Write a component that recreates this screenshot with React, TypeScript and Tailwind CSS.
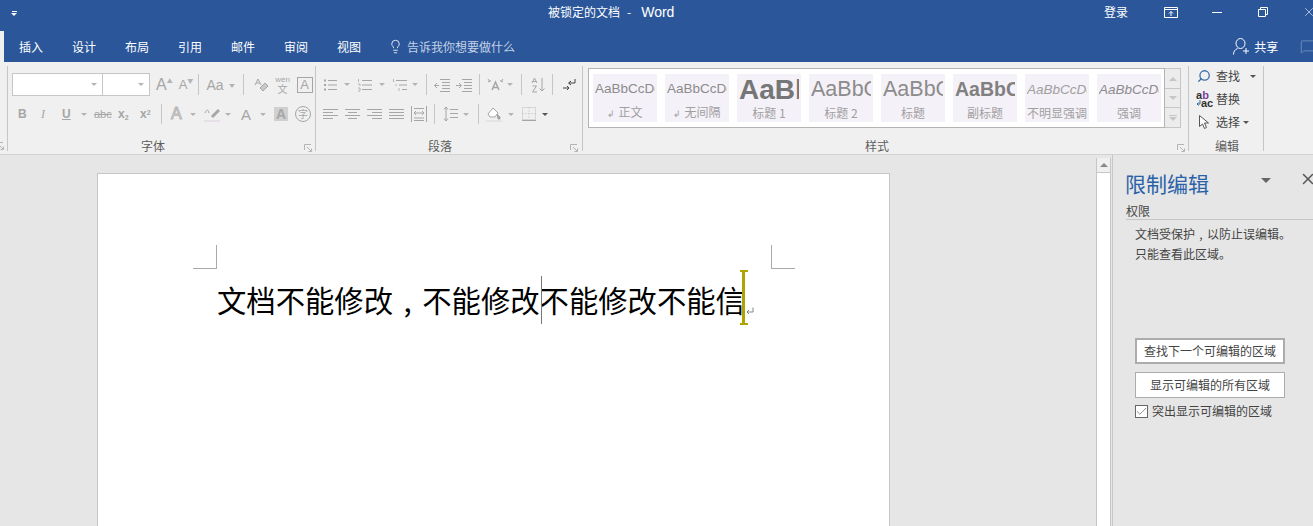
import { ReactNode } from "react";
import { Search, Lightbulb, MessageSquare, X, Check } from "lucide-react";

const cjk = "font-['Noto_Sans_CJK_SC','Noto_Sans',sans-serif]";

function Arrow({ className = "" }: { className?: string }) {
  return (
    <span className={`h-0 w-0 shrink-0 border-x-[3px] border-t-[3px] border-x-transparent border-t-[#b4b4b4] ${className}`} />
  );
}

function Sep({ className = "" }: { className?: string }) {
  return <span className={`w-px shrink-0 self-stretch bg-[#c6c6c6] ${className}`} />;
}

function Icon({ w = 16, h = 16, className = "", children }: { w?: number; h?: number; className?: string; children: ReactNode }) {
  return (
    <svg width={w} height={h} viewBox={`0 0 ${w} ${h}`} fill="none" stroke="#a6a6a6" strokeWidth="1" className={`shrink-0 ${className}`}>
      {children}
    </svg>
  );
}

function Launcher({ className = "" }: { className?: string }) {
  return (
    <svg width="8" height="8" viewBox="0 0 8 8" fill="none" stroke="#b4b4b4" className={className}>
      <path d="M.5 6V.5H7M3 3l4 4M4.5 7.5h3v-3" />
    </svg>
  );
}

function Lines({ widths }: { widths: number[][] }) {
  return (
    <Icon w={15} h={13}>
      {widths.map(([a, b], i) => (
        <path key={i} d={`M${a} ${i * 3 + 1.5}H${b}`} />
      ))}
    </Icon>
  );
}

function Group({ width, label, labelClass, launcher, children }: { width: string; label: string; labelClass: string; launcher?: string; children: ReactNode }) {
  return (
    <section className={`flex h-[85px] shrink-0 flex-col border-r border-[#c6c6c6] ${width}`}>
      <div className="h-[71px]">{children}</div>
      <div className="flex h-[14px] items-start">
        <span className={`mt-[1px] text-[12px] leading-[16px] text-[#5e5e5e] ${labelClass}`}>{label}</span>
        {launcher && <Launcher className={`mt-[7px] ${launcher}`} />}
      </div>
    </section>
  );
}

const L = "text-[#a6a6a6] font-['Liberation_Sans',sans-serif] leading-none";

function FontGroup() {
  return (
    <Group width="w-[308px]" label="字体" labelClass="ml-[133px]" launcher="ml-[139px]">
      <div className="ml-[4px] mt-[7px] flex h-[23px] items-center">
        <div className="flex h-[23px] w-[91px] items-center justify-end border border-[#c6c6c6] bg-white pr-[5px]"><Arrow /></div>
        <div className="ml-[-1px] flex h-[23px] w-[48px] items-center justify-end border border-[#c6c6c6] bg-white pr-[5px]"><Arrow /></div>
        <span className={`ml-[6px] text-[16px] ${L}`}>A</span><span className="mb-[8px] text-[6px] leading-none text-[#b4b4b4]">▲</span>
        <span className={`ml-[6px] text-[13px] ${L}`}>A</span><span className="mb-[8px] text-[6px] leading-none text-[#b4b4b4]">▼</span>
        <Sep className="ml-[5px] my-[1px]" />
        <span className={`ml-[7px] text-[14px] ${L}`}>Aa</span>
        <Arrow className="ml-[5px] mt-[2px] border-t-[4px]" />
        <Sep className="ml-[8px] my-[1px]" />
        <Icon w={16} h={16} className="ml-[9px]">
          <path d="M2 8L5 2l3 6M3 6h4" />
          <path d="M7 11l5-5 3 3-5 5z" fill="#c9c9c9" />
        </Icon>
        <div className={`ml-[5px] flex w-[18px] flex-col items-center text-[#a6a6a6] ${cjk}`}>
          <span className="text-[8px] leading-[9px] font-['Liberation_Sans',sans-serif]">wén</span>
          <span className="text-[10px] leading-[10px]">文</span>
        </div>
        <span className={`ml-[5px] flex h-[16px] w-[16px] items-center justify-center border border-[#a6a6a6] text-[13px] ${L}`}>A</span>
      </div>
      <div className="ml-[10px] mt-[8px] flex h-[20px] items-center">
        <span className={`w-[9px] text-[12px] font-bold ${L}`}>B</span>
        <span className={`ml-[14px] w-[8px] text-[12px] italic font-['Liberation_Serif',serif] text-[#a6a6a6]`}>I</span>
        <span className={`ml-[13px] w-[10px] text-[12px] font-bold underline ${L}`}>U</span>
        <Arrow className="ml-[9px]" />
        <span className={`ml-[7px] w-[17px] text-[11px] line-through ${L}`}>abc</span>
        <span className={`ml-[7px] w-[14px] text-[12px] font-bold ${L}`}>x<sub className="text-[7px]">2</sub></span>
        <span className={`ml-[8px] w-[14px] text-[12px] font-bold ${L}`}>x<sup className="text-[7px]">2</sup></span>
        <Sep className="ml-[7px]" />
        <span className={`ml-[9px] w-[14px] text-[16px] text-white [-webkit-text-stroke:1px_#b4b4b4] font-['Liberation_Sans',sans-serif] leading-none`}>A</span>
        <Arrow className="ml-[5px]" />
        <Icon w={16} h={16} className="ml-[8px]">
          <path d="M1 7c2-4 3-4 4 0" />
          <path d="M8 11l7-7" stroke="#a6a6a6" strokeWidth="3" />
          <path d="M0 15.500h16" stroke="#e6dfe8" strokeWidth="3" />
        </Icon>
        <Arrow className="ml-[5px]" />
        <span className={`ml-[10px] w-[11px] text-[15px] ${L}`}>A</span>
        <Arrow className="ml-[8px]" />
        <span className={`ml-[8px] flex h-[14px] w-[14px] items-center justify-center bg-[#d0d0d0] text-[14px] font-bold ${L}`}>A</span>
        <span className={`ml-[7px] flex h-[16px] w-[16px] items-center justify-center rounded-full border border-[#a6a6a6] text-[10px] leading-none text-[#a6a6a6] ${cjk}`}>字</span>
      </div>
    </Group>
  );
}

function ParagraphGroup() {
  const bullet = (
    <Icon w={14} h={14}>
      <path d="M5 2.500h9M5 7h9M5 11.500h9" />
      <path d="M1 2.500h2M1 7h2M1 11.500h2" strokeWidth="2" strokeDasharray="2 1" />
    </Icon>
  );
  return (
    <Group width="w-[267px]" label="段落" labelClass="ml-[112px]" launcher="ml-[118px]">
      <div className="ml-[7px] mt-[7px] flex h-[23px] items-center">
        {bullet}
        <Arrow className="ml-[7px]" />
        <Icon w={15} h={14} className="ml-[7px]">
          <path d="M5 2.500h10M5 7h10M5 11.500h10" />
          <path d="M1.500 1v3M1 6h2v2M1 10h2v3H1" strokeWidth="0.800" />
        </Icon>
        <Arrow className="ml-[7px]" />
        <Icon w={16} h={14} className="ml-[7px]">
          <path d="M4 2.500h11M7 7h8M10 11.500h5" />
          <path d="M1.500 1v3M4 6v2M7 10v3" strokeWidth="0.800" />
        </Icon>
        <Arrow className="ml-[4px]" />
        <Sep className="ml-[8px] my-[1px]" />
        <Icon w={16} h={14} className="ml-[7px]">
          <path d="M6 1.500h10M8 4.500h8M8 7.500h8M8 10.500h8M6 13.500h10" />
          <path d="M5 7.500H0M3 5L.5 7.500 3 10" />
        </Icon>
        <Icon w={16} h={14} className="ml-[6px]">
          <path d="M6 1.500h10M8 4.500h8M8 7.500h8M8 10.500h8M6 13.500h10" />
          <path d="M0 7.500h5M3 5l2.500 2.500L3 10" />
        </Icon>
        <Sep className="ml-[7px] my-[1px]" />
        <Icon w={17} h={14} className="ml-[7px]">
          <path d="M5 12L8.500 4 12 12M6 9.500h5" strokeWidth="1.500" />
          <path d="M1 4l3-1.500M16 4l-3-1.500M1 1l2 3M16 1l-2 3" />
        </Icon>
        <Arrow className="ml-[3px]" />
        <Sep className="ml-[8px] my-[1px]" />
        <Icon w={15} h={16} className="ml-[9px]">
          <path d="M1 6l2.500-5L6 6M2 4.500h3M1.500 9h4L1.500 15h4.500" />
          <path d="M11 1v13M8.500 11.500L11 14l2.500-2.500" />
        </Icon>
        <Sep className="ml-[6px] my-[1px]" />
        <Icon w={13} h={14} className="ml-[10px]">
          <path d="M12 1v4H6M8 3L5.500 5 8 7" stroke="#444" strokeWidth="1" />
          <path d="M0 10h6M4 8l2 2-2 2" stroke="#444" strokeWidth="1" />
        </Icon>
      </div>
      <div className="ml-[7px] mt-[8px] flex h-[20px] items-center">
        <Lines widths={[[0, 15], [0, 10], [0, 15], [0, 10]]} />
        <span className="ml-[7px]"><Lines widths={[[0, 15], [3, 12], [0, 15], [3, 12]]} /></span>
        <span className="ml-[7px]"><Lines widths={[[0, 15], [5, 15], [0, 15], [5, 15]]} /></span>
        <span className="ml-[7px]"><Lines widths={[[0, 15], [0, 15], [0, 15], [0, 15]]} /></span>
        <Icon w={16} h={16} className="ml-[7px]">
          <path d="M.5 0v16M15.500 0v16M3 2.500h10M3 12h10M3 14.500h10" />
          <path d="M3 7h10M5 5L3 7l2 2M11 5l2 2-2 2" />
        </Icon>
        <Sep className="ml-[7px]" />
        <Icon w={15} h={16} className="ml-[8px]">
          <path d="M3 1v14M1 3.500L3 1l2 2.500M1 12.500L3 15l2-2.500" />
          <path d="M7 3.500h8M7 7.500h8M7 11.500h8" />
        </Icon>
        <Arrow className="ml-[5px]" />
        <Sep className="ml-[9px]" />
        <Icon w={16} h={16} className="ml-[7px]">
          <path d="M2 8l5-6 5 5-3 4H4z" fill="#fff" />
          <path d="M11 8l3 3v2h-2z" fill="#a6a6a6" />
          <path d="M0 15h16" stroke="#e4e4e4" strokeWidth="2" />
        </Icon>
        <Arrow className="ml-[6px]" />
        <Icon w={14} h={14} className="ml-[8px]">
          <rect x=".5" y=".5" width="13" height="12" strokeDasharray="1 1" stroke="#bcbcbc" />
          <path d="M.5 6.500h13M7 .5v12" strokeDasharray="1 2" stroke="#bcbcbc" />
          <path d="M0 13.500h14" />
        </Icon>
        <span className="ml-[6px] h-0 w-0 border-x-[3px] border-t-[3px] border-x-transparent border-t-[#555]" />
      </div>
    </Group>
  );
}

const styles = [
  { s: "AaBbCcDd", c: "text-[13.5px] font-light text-[#8c8c8c]", l: "正文", m: true },
  { s: "AaBbCcDd", c: "text-[13.5px] font-light text-[#8c8c8c]", l: "无间隔", m: true },
  { s: "AaBbC", c: "text-[28px] font-bold text-[#767676]", l: "标题 1" },
  { s: "AaBbC", c: "text-[21.5px] text-[#8c8c8c]", l: "标题 2" },
  { s: "AaBbC", c: "text-[21.5px] text-[#8c8c8c]", l: "标题" },
  { s: "AaBbC", c: "text-[19.5px] font-bold text-[#808080]", l: "副标题" },
  { s: "AaBbCcDd", c: "text-[13.5px] italic text-[#a0a0a0]", l: "不明显强调" },
  { s: "AaBbCcDd", c: "text-[13.5px] italic text-[#8c8c8c]", l: "强调" },
];

function StylesGroup() {
  return (
    <Group width="w-[606px]" label="样式" labelClass="ml-[282px]" launcher="ml-[288px]">
      <div className="ml-[5px] mt-[2px] flex h-[60px]">
        <div className="flex h-[60px] w-[577px] shrink-0 gap-[8px] border border-[#b4b4b4] bg-white px-[4px] py-[5px]">
          {styles.map((s, i) => (
            <div key={i} className="flex h-[48px] w-[64px] shrink-0 flex-col items-center overflow-hidden bg-[#f5f1f8]">
              <div className="flex h-[31px] w-[60px] items-center overflow-hidden">
                <span className={`whitespace-nowrap font-['Liberation_Sans',sans-serif] leading-none ${s.c}`}>{s.s}</span>
              </div>
              <span className={`whitespace-nowrap text-[12px] leading-[16px] text-[#a0a0a0] ${cjk}`}>
                {s.m && <span className="mr-[3px] text-[9px]">↲</span>}
                {s.l}
              </span>
            </div>
          ))}
        </div>
        <div className="flex h-[60px] w-[16px] flex-col border border-l-0 border-[#c6c6c6] bg-[#ececec]">
          <span className="flex h-[20px] items-center justify-center border-b border-[#c6c6c6]"><span className="h-0 w-0 border-x-[4px] border-b-[4px] border-x-transparent border-b-[#c6c6c6]" /></span>
          <span className="flex h-[19px] items-center justify-center border-b border-[#c6c6c6]"><Arrow className="border-x-[4px] border-t-[4px] border-t-[#c6c6c6]" /></span>
          <span className="flex flex-1 flex-col items-center justify-center gap-[1px]"><span className="h-px w-[8px] bg-[#c6c6c6]" /><Arrow className="border-x-[4px] border-t-[4px] border-t-[#c6c6c6]" /></span>
        </div>
      </div>
    </Group>
  );
}

function EditGroup() {
  return (
    <Group width="w-[75px]" label="编辑" labelClass="ml-[26px]">
      <div className="ml-[7px] mt-[1px] flex flex-col gap-[5px] text-[12px] leading-[18px] text-[#444]">
        <div className="flex items-center">
          <Search size={14} strokeWidth={2.2} className="w-[16px] -scale-x-100 text-[#3a6ea8]" />
          <span className="ml-[4px]">查找</span>
          <span className="ml-[10px] h-0 w-0 border-x-[3px] border-t-[3px] border-x-transparent border-t-[#555]" />
        </div>
        <div className="flex items-center">
          <div className="flex w-[16px] flex-col font-['Liberation_Sans',sans-serif] text-[11px] font-bold leading-[8px] text-[#333]">
            <span>a<span className="text-[#7a3e9d]">b</span></span>
            <span className="flex items-center">
              <svg width="5" height="7" viewBox="0 0 5 7" fill="none" stroke="#2b6aa8" className="shrink-0"><path d="M4 0v4H1M2.500 2.500L1 4l1.500 1.500" /></svg>
              ac
            </span>
          </div>
          <span className="ml-[4px]">替换</span>
        </div>
        <div className="flex items-center">
          <svg width="16" height="16" viewBox="0 0 16 16" fill="#fff" stroke="#555" className="shrink-0">
            <path d="M3.500 1.500v11l3-2.500 2 4.500 2-1-2-4.500h4z" />
          </svg>
          <span className="ml-[4px]">选择</span>
          <span className="ml-[3px] h-0 w-0 border-x-[3px] border-t-[3px] border-x-transparent border-t-[#555]" />
        </div>
      </div>
    </Group>
  );
}

function Pane() {
  return (
    <aside className="flex w-[201px] shrink-0 flex-col border-l border-[#c6c6c6] pl-[13px]">
      <div className="mt-[12px] flex h-[32px] items-center">
        <span className="ml-[-1px] text-[21px] leading-[32px] text-[#2a62a8]">限制编辑</span>
        <span className="mb-[6px] ml-[52px] h-0 w-0 border-x-[5px] border-t-[5px] border-x-transparent border-t-[#666]" />
        <X size={18} strokeWidth={2} className="mb-[8px] ml-[28px] shrink-0 text-[#555]" />
      </div>
      <div className="mt-[3px] h-[18px] border-b border-[#c6c6c6] text-[12px] leading-[18px] text-[#444]">权限</div>
      <div className="ml-[9px] mt-[4px] text-[12px] leading-[20px] text-[#444]">
        <p>文档受保护<span className="inline-block w-[12px] text-center">,</span>以防止误编辑。</p>
        <p>只能查看此区域。</p>
      </div>
      <button className="ml-[9px] mt-[74px] h-[26px] w-[150px] border-2 border-[#acacac] bg-white text-center text-[12px] leading-[22px] text-[#444]">查找下一个可编辑的区域</button>
      <button className="ml-[9px] mt-[8px] h-[26px] w-[150px] border border-[#acacac] bg-white text-center text-[12px] leading-[24px] text-[#444]">显示可编辑的所有区域</button>
      <label className="ml-[9px] mt-[5px] flex h-[16px] items-center text-[12px] leading-[16px] text-[#444]">
        <span className="flex h-[13px] w-[13px] items-center justify-center border border-[#666] bg-white">
          <Check size={13} strokeWidth={1.5} className="shrink-0 text-[#777]" />
        </span>
        <span className="ml-[4px]">突出显示可编辑的区域</span>
      </label>
    </aside>
  );
}

export default function App() {
  return (
    <div className={`flex h-[526px] w-[1313px] flex-col overflow-hidden whitespace-nowrap bg-[#e6e6e6] ${cjk}`}>
      {/* title bar */}
      <header className="flex h-[31px] shrink-0 items-center bg-[#2b579a] text-white">
        <span className="ml-[10px] mt-[-4px] flex w-[8px] shrink-0 flex-col items-center gap-[1px]">
          <span className="h-px w-[5px] bg-white" />
          <span className="h-0 w-0 border-x-[3px] border-t-[3px] border-x-transparent border-t-white" />
        </span>
        <span className="ml-[530px] mt-[-7px] flex w-[200px] shrink-0 items-baseline text-[12px] leading-[24px]">
          被锁定的文档
          <span className="ml-[7px]">-</span>
          <span className="ml-[10px] font-['Liberation_Sans',sans-serif] text-[14px]">Word</span>
        </span>
        <span className="ml-[356px] mt-[-7px] shrink-0 text-[12px] leading-[24px]">登录</span>
        <svg width="14" height="11" viewBox="0 0 14 11" fill="none" stroke="white" className="ml-[36px] mt-[-7px] shrink-0">
          <path d="M.5.5h13v10H.5zM.5 2.500h13M7 9V4.500M5 6.500l2-2 2 2" />
        </svg>
        <span className="ml-[34px] mt-[-7px] h-px w-[10px] shrink-0 bg-white" />
        <svg width="10" height="10" viewBox="0 0 10 10" fill="none" stroke="white" className="ml-[36px] mt-[-7px] shrink-0">
          <path d="M.5 2.500h7v7h-7zM2.500 2.500v-2h7v7h-2" />
        </svg>
        <X size={14} strokeWidth={1} className="ml-[34px] mt-[-7px] shrink-0" />
      </header>
      {/* tabs */}
      <nav className="flex h-[31px] shrink-0 items-center bg-[#2b579a] text-[12px] text-white">
        <span className="h-[31px] w-[4px] shrink-0 bg-[#f0f0f0]" />
        <div className="ml-[15px] flex gap-[29px]">
          {["插入", "设计", "布局", "引用", "邮件", "审阅", "视图"].map((t) => (
            <span key={t}>{t}</span>
          ))}
        </div>
        <Lightbulb size={15} strokeWidth={1.3} className="ml-[27px] shrink-0" />
        <span className="ml-[4px] text-[#c3d1e6]">告诉我你想要做什么</span>
        <svg width="17" height="17" viewBox="0 0 17 17" fill="none" stroke="white" className="ml-[718px] shrink-0">
          <ellipse cx="7.500" cy="5.500" rx="4.500" ry="5" />
          <path d="M.5 16.500c0-3 1.500-5 4-6M13 10v6M10 13h6" />
        </svg>
        <span className="ml-[4px]">共享</span>
        <MessageSquare size={15} strokeWidth={1} className="ml-[22px] shrink-0 text-[#8fa8cc]" />
      </nav>
      {/* ribbon */}
      <div className="flex h-[93px] shrink-0 border-b border-[#d2d2d2] bg-[#f0f0f0] pt-[4px]">
        <div className="flex h-[85px] w-[8px] shrink-0 items-end justify-start overflow-hidden border-r border-[#c6c6c6]">
          <Launcher className="mb-[1px] ml-[-4px] shrink-0" />
        </div>
        <FontGroup />
        <ParagraphGroup />
        <StylesGroup />
        <EditGroup />
      </div>
      {/* workspace */}
      <main className="flex min-h-0 flex-1">
        <div className="min-w-0 flex-1 overflow-hidden pl-[97px] pt-[18px]">
          <div className="h-[400px] w-[793px] border border-[#c6c6c6] bg-white">
            <div className="flex justify-between pl-[95px] pr-[94px] pt-[71px]">
              <span className="h-[24px] w-[24px] border-b border-r border-[#aaa]" />
              <span className="h-[24px] w-[24px] border-b border-l border-[#aaa]" />
            </div>
            <p className="ml-[119px] mt-[9px] text-[29.33px] leading-[42px] text-black">
              文档不能修改<span className="inline-block w-[29.33px] text-center">,</span>不能修改
              <span className="relative inline-block h-0 w-0">
                <span className="absolute bottom-[-12px] left-[1px] h-[48px] w-px bg-[#777]" />
              </span>
              不能修改不能信
              <span className="relative inline-block h-0 w-0">
                <span className="absolute bottom-[-13px] left-[-5px] h-[55px] w-[8px] border-y-2 border-[#b0a400]">
                  <span className="mx-auto block h-full w-[3px] bg-[#b0a400]" />
                </span>
                <svg width="8" height="8" viewBox="0 0 8 8" fill="none" stroke="#888" className="absolute bottom-[-3px] left-[1px]">
                  <path d="M7 .5v4.500H1M3 3L1 5l2 2" />
                </svg>
              </span>
            </p>
          </div>
        </div>
        <div className="mr-[1px] mt-[3px] flex w-[15px] shrink-0 flex-col border-x border-[#c6c6c6] bg-white">
          <span className="flex h-[15px] items-center justify-center border-b border-[#c6c6c6] bg-[#f0f0f0]">
            <span className="h-0 w-0 border-x-[4px] border-b-[4px] border-x-transparent border-b-[#888]" />
          </span>
        </div>
        <Pane />
      </main>
    </div>
  );
}
